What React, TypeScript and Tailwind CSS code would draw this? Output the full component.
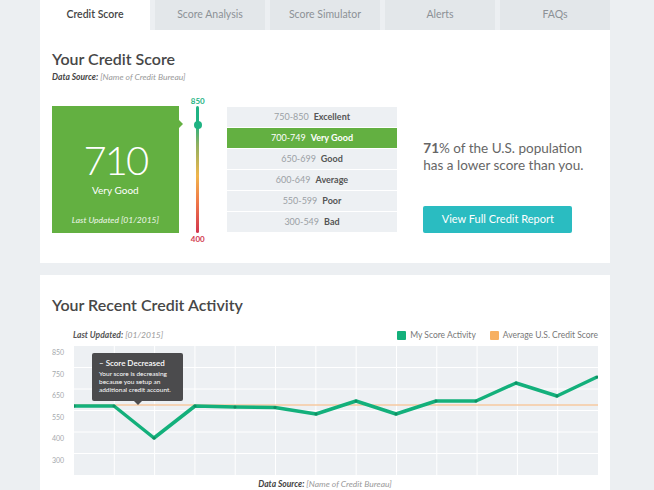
const tabs = ['Credit Score', 'Score Analysis', 'Score Simulator', 'Alerts', 'FAQs'];

const ranges = [
  { range: '750-850', label: 'Excellent' },
  { range: '700-749', label: 'Very Good', active: true },
  { range: '650-699', label: 'Good' },
  { range: '600-649', label: 'Average' },
  { range: '550-599', label: 'Poor' },
  { range: '300-549', label: 'Bad' },
];

const yLabels = ['850', '750', '650', '550', '400', '300'];

// score points, in plot coordinates (524 x 129)
const points: [number, number][] = [
  [0, 60], [40, 60], [80, 92], [121, 60], [161, 61], [201, 61.5], [242, 68],
  [282, 55], [322, 68], [362, 55], [402, 55], [442, 37], [483, 50], [523, 31],
];

function ScoreChart() {
  const w = 524;
  const h = 129;
  const rowH = h / 6;
  const colW = w / 13;
  return (
    <svg width={w} height={h} className="block">
      <rect width={w} height={h} fill="#edf0f3" />
      {[1, 2, 3, 4, 5].map((i) => (
        <line key={'h' + i} x1={0} x2={w} y1={i * rowH} y2={i * rowH} stroke="#ffffff" strokeWidth={1} />
      ))}
      {Array.from({ length: 12 }, (_, i) => i + 1).map((i) => (
        <line key={'v' + i} x1={i * colW} x2={i * colW} y1={0} y2={h} stroke="#ffffff" strokeWidth={1} />
      ))}
      <line x1={0} x2={w} y1={59} y2={59} stroke="#f6caa0" strokeWidth={1.5} />
      <polyline
        points={points.map((p) => p.join(',')).join(' ')}
        fill="none"
        stroke="#13b07b"
        strokeWidth={3.5}
        strokeLinejoin="round"
      />
      {points.map(([x, y], i) => (
        <circle key={i} cx={x} cy={y} r={1.6} fill="#0f8f63" />
      ))}
    </svg>
  );
}

export default function App() {
  return (
    <div
      className="w-[654px] h-[490px] overflow-hidden bg-[#eceff2] pl-[40px]"
      style={{ fontFamily: 'Lato, "Open Sans", sans-serif' }}
    >
      <div className="w-[570px]">
        {/* tabs */}
        <div className="flex gap-[5px] h-[30px]">
          {tabs.map((t, i) => (
            <div
              key={t}
              className={`w-[110px] flex items-center justify-center text-[10.5px] ${
                i === 0 ? 'bg-white text-[#444] font-semibold' : 'bg-[#e3e7ea] text-[#8c9196]'
              }`}
            >
              {t}
            </div>
          ))}
        </div>

        {/* credit score card */}
        <div className="bg-white h-[233px] px-[12px] pt-[18px]">
          <h2 className="text-[16px] leading-[22px] font-semibold text-[#474747]">Your Credit Score</h2>
          <p className="text-[8.5px] leading-[12px] italic mt-[1px]">
            <span className="font-bold text-[#444]">Data Source:</span>{' '}
            <span className="text-[#9a9a9a]">[Name of Credit Bureau]</span>
          </p>

          <div className="flex items-start mt-[23px]">
            <div className="relative w-[127px] h-[127px] bg-[#63b041] flex flex-col items-center text-white">
              <div className="text-[40px] leading-[48px] font-light mt-[30px] tracking-[-2px]">710</div>
              <div className="text-[10px] leading-[12px]">Very Good</div>
              <div className="text-[8.5px] leading-[12px] italic mt-[18px] text-[#eef6e9]">Last Updated [01/2015]</div>
              <div className="absolute right-[-4px] top-[14px] w-0 h-0 border-y-[4px] border-y-transparent border-l-[4px] border-l-[#63b041]" />
            </div>

            <div className="w-[36px] flex flex-col items-center -mt-[10px] ml-[1px]">
              <div className="text-[8px] leading-[10px] font-bold text-[#1fb383]">850</div>
              <div className="relative w-[3px] h-[127px] rounded-full bg-[linear-gradient(to_bottom,#1fb383_0%,#1fb383_14%,#8db060_30%,#f0b54c_55%,#f07a48_75%,#d2354f_100%)]">
                <div className="absolute left-[-2.5px] top-[15px] w-[8px] h-[8px] rounded-full bg-[#1fb383]" />
              </div>
              <div className="text-[8px] leading-[10px] font-bold text-[#d23a50] mt-[1px]">400</div>
            </div>

            <div className="w-[171px] ml-[11px] mt-[1px] flex flex-col gap-[1px]">
              {ranges.map((r) => (
                <div
                  key={r.range}
                  className={`h-[20px] flex items-center justify-center gap-[5px] text-[9px] ${
                    r.active ? 'bg-[#63b041] text-white' : 'bg-[#edf0f3]'
                  }`}
                >
                  <span className={r.active ? '' : 'text-[#9ba0a5]'}>{r.range}</span>
                  <span className={`font-bold ${r.active ? '' : 'text-[#555]'}`}>{r.label}</span>
                </div>
              ))}
            </div>

            <div className="ml-[26px] w-[175px]">
              <p className="mt-[34px] text-[13.5px] leading-[17px] text-[#666]">
                <span className="font-bold">71</span>% of the U.S. population has a lower score than you.
              </p>
              <button className="mt-[32px] w-[149px] h-[27px] rounded-[2px] bg-[#2abcc1] text-white text-[11px]">
                View Full Credit Report
              </button>
            </div>
          </div>
        </div>

        {/* credit activity card */}
        <div className="bg-white mt-[12px] h-[230px] px-[12px] pt-[19px]">
          <h2 className="text-[16px] leading-[22px] font-semibold text-[#474747]">Your Recent Credit Activity</h2>

          <div className="flex items-center justify-between mt-[13px] pl-[21px] h-[12px]">
            <p className="text-[8.5px] italic">
              <span className="font-bold text-[#555]">Last Updated:</span>{' '}
              <span className="text-[#9a9a9a]">[01/2015]</span>
            </p>
            <div className="flex items-center text-[8.5px] text-[#777]">
              <span className="w-[9px] h-[9px] rounded-[1px] bg-[#13b07b] mr-[4px]" />
              <span>My Score Activity</span>
              <span className="w-[9px] h-[9px] rounded-[1px] bg-[#f7b062] ml-[14px] mr-[4px]" />
              <span>Average U.S. Credit Score</span>
            </div>
          </div>

          <div className="flex mt-[5px]">
            <div className="w-[22px] flex flex-col">
              {yLabels.map((l) => (
                <div key={l} className="h-[21.5px] text-[7px] leading-[12px] text-[#a5a9ad]">
                  {l}
                </div>
              ))}
            </div>
            <div className="relative">
              <ScoreChart />
              <div className="absolute left-[18px] top-[7px] w-[91px] h-[48px] rounded-[2px] bg-[#4b4b4d] px-[7px] pt-[5px] text-white">
                <div className="text-[8px] leading-[11px] font-semibold">– Score Decreased</div>
                <div className="text-[6.5px] leading-[8px] mt-[1px]">
                  Your score is decreasing because you setup an additional credit account.
                </div>
                <div className="absolute left-[42px] bottom-[-4px] w-0 h-0 border-x-[4px] border-x-transparent border-t-[4px] border-t-[#4b4b4d]" />
              </div>
            </div>
          </div>

          <p className="text-center text-[8.5px] leading-[12px] italic mt-[3px]">
            <span className="font-bold text-[#444]">Data Source:</span>{' '}
            <span className="text-[#9a9a9a]">[Name of Credit Bureau]</span>
          </p>
        </div>
      </div>
    </div>
  );
}
